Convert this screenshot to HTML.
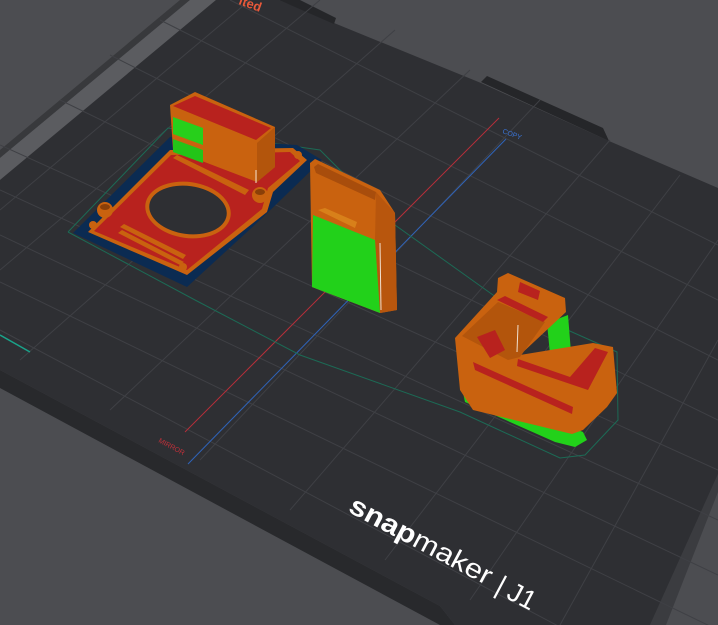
<!DOCTYPE html>
<html><head><meta charset="utf-8"><style>
html,body{margin:0;padding:0;background:#4c4d51;overflow:hidden;width:718px;height:625px}
svg{display:block}
</style></head><body>
<svg width="718" height="625" viewBox="0 0 718 625" xmlns="http://www.w3.org/2000/svg" style="overflow:hidden">
<rect width="718" height="625" fill="#4c4d51"/>
<polygon points="180,0 190,0 0,158 0,150" fill="#38393c"/>
<polygon points="190,0 216,0 0,180 0,158" fill="#5b5c60"/>
<polygon points="0,370 440,606 455,625 440,625 0,388" fill="#28292c"/>
<polygon points="718,474 718,492 666,625 650,625" fill="#3b3c40"/>
<polygon points="216,0 279,0 334,23 481,83 609,141 718,188 718,474 650,625 455,625 440,606 0,370 0,180" fill="#2e2f33"/>
<polygon points="279,0 300,0 336,18 334,24" fill="#252629"/>
<polygon points="481,82 487,76 603,128 609,141" fill="#252629"/>
<g stroke="#3f4045" stroke-width="1" fill="none">
<line x1="0" y1="190" x2="718" y2="520"/>
<line x1="0" y1="235" x2="718" y2="575"/>
<line x1="0" y1="282" x2="718" y2="630"/>
<line x1="0" y1="330" x2="660" y2="680"/>
<line x1="60" y1="100" x2="718" y2="420"/>
<line x1="110" y1="55" x2="718" y2="360"/>
<line x1="160" y1="20" x2="718" y2="300"/>
<line x1="230" y1="0" x2="718" y2="245"/>
<line x1="0" y1="145" x2="718" y2="470"/>
<line x1="250" y1="0" x2="0" y2="210"/>
<line x1="320" y1="0" x2="0" y2="270"/>
<line x1="395" y1="30" x2="20" y2="360"/>
<line x1="470" y1="70" x2="110" y2="410"/>
<line x1="540" y1="100" x2="200" y2="460"/>
<line x1="610" y1="140" x2="290" y2="510"/>
<line x1="680" y1="175" x2="385" y2="560"/>
<line x1="718" y1="240" x2="470" y2="600"/>
<line x1="718" y1="340" x2="560" y2="625"/>
</g>
<line x1="499" y1="118" x2="185" y2="432" stroke="#b52f3a" stroke-width="1"/>
<line x1="506" y1="139" x2="188" y2="464" stroke="#2f63b8" stroke-width="1"/>
<line x1="0" y1="335" x2="30" y2="352" stroke="#1aa38a" stroke-width="1.5"/>
<text x="502" y="133" font-family="Liberation Sans, sans-serif" font-size="7" fill="#3a74d6" transform="rotate(20 502 133)">COPY</text>
<text x="158" y="442" font-family="Liberation Sans, sans-serif" font-size="7" fill="#c0303a" transform="rotate(28 158 442)">MIRROR</text>
<text x="238" y="4" font-family="Liberation Sans, sans-serif" font-weight="bold" font-size="13" fill="#e8593a" transform="rotate(20 238 4)">ited</text>
<polyline points="68,232 168,128 320,150 395,225 500,300 617,352 618,420 585,455 560,458 460,412 300,355 195,300 68,232" fill="none" stroke="#1c6a55" stroke-width="1"/>
<!-- object 1 -->
<polygon points="73,233 170,137 297,145 322,160 260,220 187,287" fill="#0b2b52"/>
<polygon points="88,232 170,150 293,148 307,160 273,192 267,212 187,275" fill="#c9620f"/>
<polygon points="94,231 171,155 290,152 300,161 268,188 262,209 187,270" fill="#b8221e"/>
<ellipse cx="188" cy="210" rx="43" ry="28" fill="#c9620f" transform="rotate(8 188 210)"/>
<ellipse cx="188" cy="210" rx="39" ry="24" fill="#2e2f33" transform="rotate(8 188 210)"/>
<polygon points="173,158 177,155 249,190 245,195" fill="#c9620f"/>
<polygon points="120,227 124,224 186,255 183,259" fill="#c9620f"/>
<polygon points="118,233 122,230 184,262 180,265" fill="#c9620f"/>
<circle cx="105" cy="210" r="8" fill="#c9620f"/><ellipse cx="105" cy="207" rx="5" ry="3" fill="#8a3f08"/>
<circle cx="260" cy="195" r="8" fill="#c9620f"/><ellipse cx="260" cy="192" rx="5" ry="3" fill="#8a3f08"/>
<circle cx="93" cy="225" r="4" fill="#c9620f"/><circle cx="183" cy="267" r="4" fill="#c9620f"/><circle cx="298" cy="155" r="4" fill="#c9620f"/>
<polygon points="170,105 195,92 275,127 275,167 257,182 173,150" fill="#c9620f"/>
<polygon points="173,106 195,96 271,128 256,140" fill="#b8221e"/>
<polygon points="257,143 275,127 275,167 257,182" fill="#b3550c"/>
<polygon points="173,117 203,128 203,145 173,134" fill="#27cf1b"/>
<polygon points="173,139 203,150 203,163 173,152" fill="#23c418"/>
<line x1="256" y1="170" x2="256" y2="183" stroke="#f0e0d0" stroke-width="1"/>
<!-- object 2 -->
<polygon points="310,163 315,159 380,190 395,213 397,310 380,313 312,287" fill="#c9620f"/>
<polygon points="314,167 318,164 376,192 375,200 316,173" fill="#a84d0c"/>
<polygon points="376,192 395,213 397,310 380,313 375,240" fill="#b8560d"/>
<polygon points="318,210 325,208 357,222 355,228" fill="#d8801a"/>
<polygon points="313,215 375,240 380,313 312,287" fill="#22d11a"/>
<line x1="380" y1="243" x2="381" y2="310" stroke="#f0e0d0" stroke-width="1"/>
<!-- object 3 -->
<polygon points="462,388 468,386 583,432 587,440 575,447 555,442 465,402" fill="#22d11a"/>
<polygon points="547,323 568,315 572,365 552,375" fill="#22d11a"/>
<polygon points="455,338 497,292 498,278 508,273 565,298 566,312 520,355 593,343 613,347 617,393 607,407 583,430 572,434 473,410 460,390" fill="#c9620f"/>
<polygon points="462,336 498,302 545,322 520,357 508,360" fill="#b3550c"/>
<polygon points="477,337 495,330 505,350 490,358" fill="#b8221e"/>
<polygon points="497,300 505,296 548,317 543,322" fill="#b8221e"/>
<polygon points="520,282 540,291 538,300 518,292" fill="#b8221e"/>
<polygon points="518,359 570,377 595,348 608,352 588,390 517,366" fill="#b8221e"/>
<polygon points="473,362 573,407 572,414 475,370" fill="#b8221e"/>
<line x1="518" y1="325" x2="517" y2="352" stroke="#f0e0d0" stroke-width="1"/>
<!-- logo -->
<g transform="rotate(28 350 506)" fill="#ffffff" font-family="Liberation Sans, sans-serif">
<text x="350" y="512" font-size="27" font-weight="bold" textLength="158" lengthAdjust="spacingAndGlyphs">snap<tspan font-weight="normal">maker</tspan></text>
<text x="517" y="514" font-size="27" font-weight="normal">|</text>
<text x="530" y="514" font-size="27" font-weight="normal">J1</text>
</g>
</svg>
</body></html>
